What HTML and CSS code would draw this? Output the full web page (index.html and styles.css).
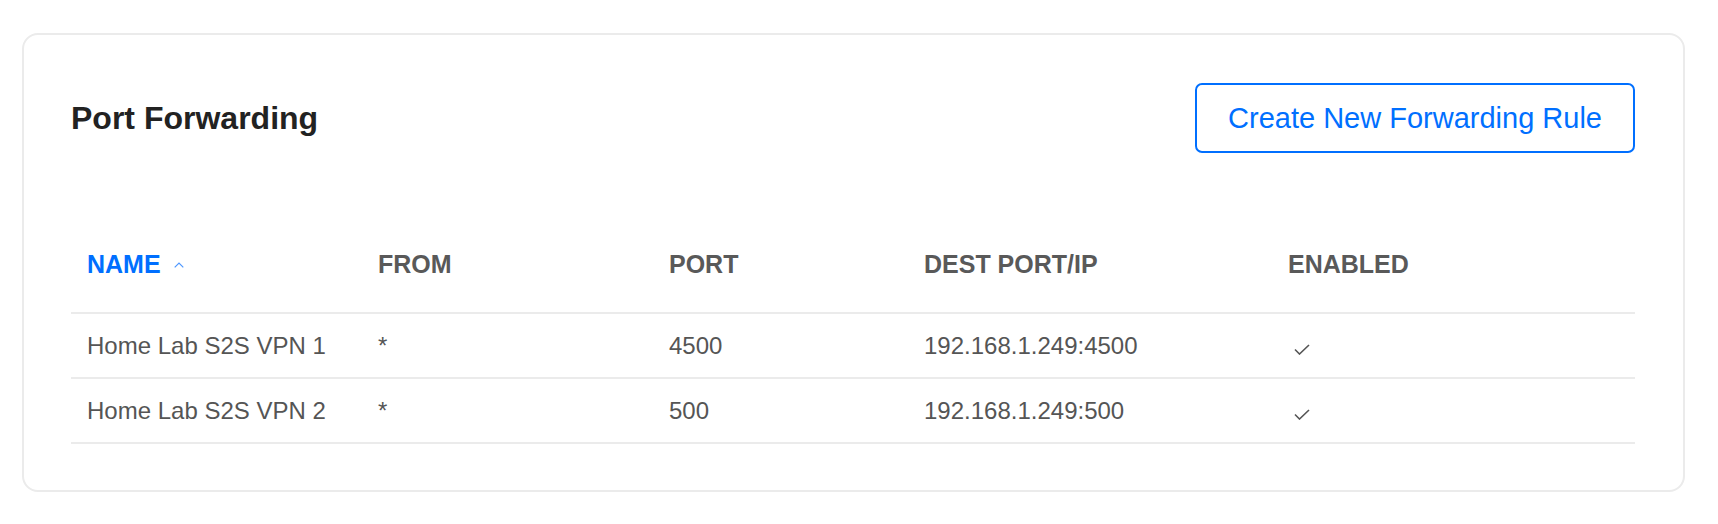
FILE: index.html
```html
<!DOCTYPE html>
<html lang="en">
<head>
<meta charset="utf-8">
<title>Port Forwarding</title>
<link rel="stylesheet" href="styles.css">
</head>
<body>
<section class="card">
  <header class="card-head">
    <h1 class="title">Port Forwarding</h1>
    <button class="btn-outline" type="button">Create New Forwarding Rule</button>
  </header>
  <table class="rules">
    <colgroup>
      <col class="c-name"><col class="c-from"><col class="c-port"><col class="c-dest"><col>
    </colgroup>
    <thead>
      <tr>
        <th class="sorted">NAME<svg class="sort" width="10" height="6" viewBox="0 0 10 6"><path d="M0.7 5.3 L5 1 L9.3 5.3" fill="none" stroke="#4d97ff" stroke-width="1.2"/></svg></th>
        <th>FROM</th>
        <th>PORT</th>
        <th>DEST PORT/IP</th>
        <th>ENABLED</th>
      </tr>
    </thead>
    <tbody>
      <tr>
        <td>Home Lab S2S VPN 1</td>
        <td>*</td>
        <td>4500</td>
        <td>192.168.1.249:4500</td>
        <td><svg class="check" width="16" height="11" viewBox="0 0 16 11"><path d="M1 5.5 L5.5 10 L15 1" fill="none" stroke="#555" stroke-width="1.6"/></svg></td>
      </tr>
      <tr>
        <td>Home Lab S2S VPN 2</td>
        <td>*</td>
        <td>500</td>
        <td>192.168.1.249:500</td>
        <td><svg class="check" width="16" height="11" viewBox="0 0 16 11"><path d="M1 5.5 L5.5 10 L15 1" fill="none" stroke="#555" stroke-width="1.6"/></svg></td>
      </tr>
    </tbody>
  </table>
</section>
</body>
</html>
```
FILE: styles.css
```css
* { box-sizing: border-box; }
html, body { margin: 0; padding: 0; background: #fff; }
body {
  font-family: "Liberation Sans", Arial, sans-serif;
  color: #555;
}
.card {
  margin: 33px 33px 0 22px;
  border: 2px solid #ebebeb;
  border-radius: 16px;
  padding: 48px 48px 46px 47px;
}
.card-head {
  display: flex;
  align-items: center;
  justify-content: space-between;
}
.title {
  margin: 0;
  font-size: 32px;
  font-weight: 700;
  color: #222;
  line-height: 40px;
}
.btn-outline {
  height: 70px;
  padding: 0 31px;
  border: 2px solid #006fff;
  border-radius: 7px;
  background: #fff;
  color: #006fff;
  font-family: "Liberation Sans", Arial, sans-serif;
  font-size: 29px;
  line-height: 32px;
}
.rules {
  width: 100%;
  margin-top: 72px;
  border-collapse: collapse;
  table-layout: fixed;
}
.c-name { width: 291px; }
.c-from { width: 291px; }
.c-port { width: 255px; }
.c-dest { width: 364px; }
.rules th {
  text-align: left;
  font-size: 25px;
  font-weight: 700;
  color: #595959;
  line-height: 30px;
  padding: 24px 16px 33px;
  border-bottom: 2px solid #ebebeb;
  white-space: nowrap;
}
.rules th.sorted { color: #006fff; }
.sort { margin-left: 13px; vertical-align: 5px; }
.rules td {
  font-size: 24px;
  line-height: 30px;
  color: #555;
  padding: 17px 16px 16px;
  border-bottom: 2px solid #ebebeb;
  white-space: nowrap;
}
.check { display: inline-block; margin-left: 6px; vertical-align: -1px; }
```
